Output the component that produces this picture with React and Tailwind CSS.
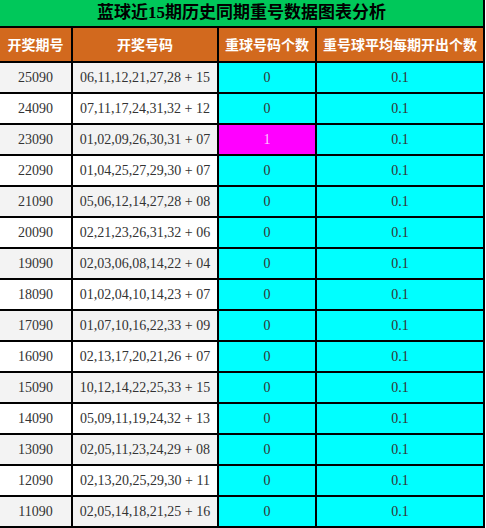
const rows = [
  ['25090', '06,11,12,21,27,28 + 15', 0],
  ['24090', '07,11,17,24,31,32 + 12', 0],
  ['23090', '01,02,09,26,30,31 + 07', 1],
  ['22090', '01,04,25,27,29,30 + 07', 0],
  ['21090', '05,06,12,14,27,28 + 08', 0],
  ['20090', '02,21,23,26,31,32 + 06', 0],
  ['19090', '02,03,06,08,14,22 + 04', 0],
  ['18090', '01,02,04,10,14,23 + 07', 0],
  ['17090', '01,07,10,16,22,33 + 09', 0],
  ['16090', '02,13,17,20,21,26 + 07', 0],
  ['15090', '10,12,14,22,25,33 + 15', 0],
  ['14090', '05,09,11,19,24,32 + 13', 0],
  ['13090', '02,05,11,23,24,29 + 08', 0],
  ['12090', '02,13,20,25,29,30 + 11', 0],
  ['11090', '02,05,14,18,21,25 + 16', 0],
];

const serif = "font-['Liberation_Serif','Noto_Sans_CJK_SC',serif]";

export default function App() {
  return (
    <div className={`w-[486px] h-[528px] bg-white ${serif}`}>
      <div className="w-[485px] bg-black pr-[2px] pb-[2px] grid grid-cols-[71px_144px_96px_166px] gap-[2px]">
        {/* Title */}
        <div className="col-span-4 h-[26px] bg-[#00c85a] flex items-center justify-center text-[17px] font-bold text-black whitespace-nowrap">
          蓝球近15期历史同期重号数据图表分析
        </div>

        {/* Header */}
        {['开奖期号', '开奖号码', '重球号码个数', '重号球平均每期开出个数'].map(h => (
          <div
            key={h}
            className="h-[33px] bg-[#d2691e] flex items-center justify-center whitespace-nowrap text-white text-[14px] font-bold font-['Noto_Sans_CJK_SC',sans-serif]"
          >
            {h}
          </div>
        ))}

        {/* Rows */}
        {rows.map(([issue, nums, count], i) => {
          const bg = i % 2 === 0 ? 'bg-[#f3f3f3]' : 'bg-white';
          return [
            <div key={issue + 'a'} className={`h-[29px] ${bg} flex items-center justify-center text-[14px] text-[#333]`}>
              {issue}
            </div>,
            <div key={issue + 'b'} className={`h-[29px] ${bg} flex items-center justify-center text-[14px] text-[#333]`}>
              {nums}
            </div>,
            count ? (
              <div key={issue + 'c'} className="h-[29px] bg-[#ff00ff] flex items-center justify-center text-[14px] text-[#ffc8ff]">
                {count}
              </div>
            ) : (
              <div key={issue + 'c'} className="h-[29px] bg-[#00ffff] flex items-center justify-center text-[14px] text-[#333]">
                {count}
              </div>
            ),
            <div key={issue + 'd'} className="h-[29px] bg-[#00ffff] flex items-center justify-center text-[14px] text-[#333]">
              0.1
            </div>,
          ];
        })}
      </div>
    </div>
  );
}
